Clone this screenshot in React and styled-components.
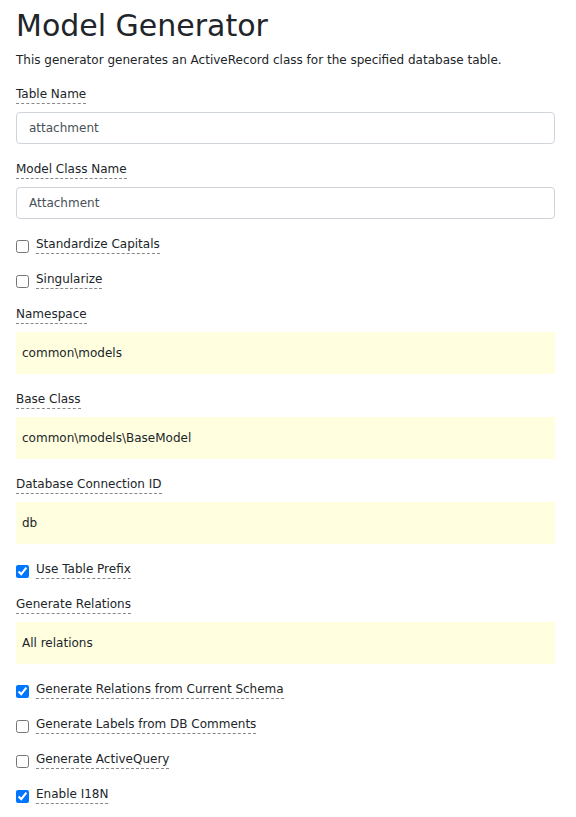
import React from 'react';
import styled, { createGlobalStyle } from 'styled-components';

const GlobalStyle = createGlobalStyle`
  html, body {
    margin: 0;
    padding: 0;
    background: #ffffff;
  }
  body {
    font-family: "DejaVu Sans", Verdana, sans-serif;
    font-size: 12px;
    color: #212529;
  }
`;

const Page = styled.div`
  width: 539px;
  padding: 0 21px 0 16px;
`;

const Title = styled.h1`
  margin: 0;
  padding-top: 7px;
  font-size: 30px;
  font-weight: 400;
  line-height: 38px;
  color: #212529;
`;

const Intro = styled.p`
  margin: 6px 0 15px;
  line-height: 19px;
`;

const Group = styled.div`
  margin-bottom: 16px;
`;

const FieldLabel = styled.label`
  display: inline-block;
  line-height: 18px;
  border-bottom: 1px dashed #888888;
  margin-bottom: ${(p) => (p.$check ? 0 : 8)}px;
  color: #212529;
`;

const TextInput = styled.input`
  display: block;
  box-sizing: border-box;
  width: 100%;
  height: 32px;
  padding: 0 12px;
  border: 1px solid #ced4da;
  border-radius: 4px;
  font-family: inherit;
  font-size: 12px;
  color: #495057;
  background: #ffffff;
  outline: none;
`;

const Sticky = styled.div`
  box-sizing: border-box;
  height: 42px;
  padding: 0 6px;
  display: flex;
  align-items: center;
  background: #ffffe0;
  color: #212529;
`;

const CheckRow = styled.div`
  display: flex;
  align-items: center;
  margin-bottom: 16px;
`;

const Box = styled.input`
  width: 13px;
  height: 13px;
  margin: 3px 7px 0 0;
`;

const Field = ({ label, value }) => (
  <Group>
    <FieldLabel>{label}</FieldLabel>
    <TextInput defaultValue={value} readOnly />
  </Group>
);

const StickyField = ({ label, value }) => (
  <Group>
    <FieldLabel>{label}</FieldLabel>
    <Sticky>{value}</Sticky>
  </Group>
);

const Check = ({ label, checked }) => (
  <CheckRow>
    <Box type="checkbox" defaultChecked={checked} />
    <FieldLabel $check>{label}</FieldLabel>
  </CheckRow>
);

export default function App() {
  return (
    <Page>
      <GlobalStyle />
      <Title>Model Generator</Title>
      <Intro>This generator generates an ActiveRecord class for the specified database table.</Intro>
      <Field label="Table Name" value="attachment" />
      <Field label="Model Class Name" value="Attachment" />
      <Check label="Standardize Capitals" />
      <Check label="Singularize" />
      <StickyField label="Namespace" value="common\models" />
      <StickyField label="Base Class" value="common\models\BaseModel" />
      <StickyField label="Database Connection ID" value="db" />
      <Check label="Use Table Prefix" checked />
      <StickyField label="Generate Relations" value="All relations" />
      <Check label="Generate Relations from Current Schema" checked />
      <Check label="Generate Labels from DB Comments" />
      <Check label="Generate ActiveQuery" />
      <Check label="Enable I18N" checked />
    </Page>
  );
}
